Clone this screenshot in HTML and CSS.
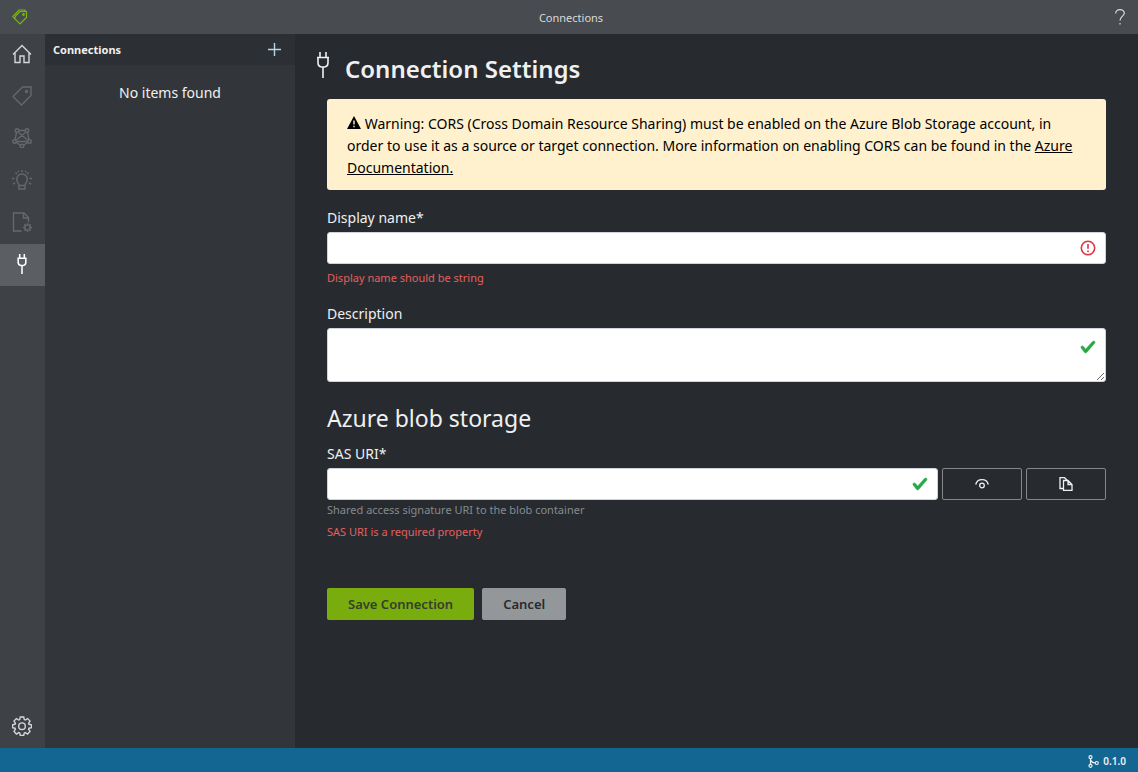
FILE: index.html
```html
<!DOCTYPE html>
<html lang="en">
<head>
<meta charset="utf-8">
<title>Connections</title>
<link rel="stylesheet" href="styles.css">
</head>
<body>
<svg class="symbols" aria-hidden="true">
  <symbol id="plug" viewBox="0 0 14 26"><path d="M4 0v5M10 0v5M1 5.500h12M2 5.500v5q0 4 3.500 4.500h3q3.500-.5 3.500-4.500v-5M7 15v11"/></symbol>
  <symbol id="tick" viewBox="0 0 8 8"><path d="M2.300 6.730.6 4.530c-.4-1.040.46-1.400 1.100-.8l1.100 1.400 3.400-3.800c.6-.63 1.600-.27 1.200.7l-4 4.600c-.43.5-.8.4-1.100.1z"/></symbol>
</svg>
<div class="app">
  <header class="titlebar">
    <svg class="logo" viewBox="0 0 16 16"><path d="M4 6.500 8 2.500h6.500v6L8 15 2.500 9.500zM3.500 10.500 .8 7.500 7 1h6v1.500"/><circle cx="11.500" cy="5.500" r=".8"/></svg>
    <span class="titlebar-text">Connections</span>
    <button class="help" aria-label="Help"><svg viewBox="0 0 10 16"><path d="M.7 4.500C.7 2 2.300.7 5 .7S9.300 2 9.300 4.200C9.300 7 5 7.500 5 11.500M5 14v1.500"/></svg></button>
  </header>
  <div class="workspace">
    <nav class="rail">
      <a href="#home" class="rail-item" aria-label="Home"><svg viewBox="0 0 20 20"><path d="M1 10.500 10 1.500l9 9M3 9v9.500h5v-6.500h4v6.500h5V9"/></svg></a>
      <a href="#tag" class="rail-item dim" aria-label="Tags"><svg viewBox="0 0 20 20"><path d="M1 10.500 10.500 1H19v8.500L9.500 19z"/><circle cx="14.500" cy="5.500" r="1"/></svg></a>
      <a href="#train" class="rail-item dim" aria-label="Train"><svg viewBox="0 0 20 20"><path d="M6.500 2.500h7M4.500 4.500 3 12M15.500 4.500 17 12M4 14l4 3M16 14l-4 3M6.500 4.500 15.500 12M13.500 4.500 4.500 12M5 13.500h10"/><circle cx="5" cy="2.500" r="1.800"/><circle cx="15" cy="2.500" r="1.800"/><circle cx="2.500" cy="13.500" r="1.800"/><circle cx="17.500" cy="13.500" r="1.800"/><circle cx="10" cy="18" r="1.800"/></svg></a>
      <a href="#analyze" class="rail-item dim" aria-label="Analyze"><svg viewBox="0 0 20 20"><path d="M7 15.500c0-2.500-2.300-3-2.300-6.200a5.300 5.300 0 0 1 10.600 0c0 3.200-2.300 3.700-2.300 6.200zM7 15.500V19h6v-3.500M10 0v2M3.500 2.500 5 4M16.500 2.500 15 4M0 8.500h2.500M17.500 8.500H20M1 14l2-1M19 14l-2-1M6 .8l.7 1.500M14 .8l-.7 1.500"/></svg></a>
      <a href="#compose" class="rail-item dim" aria-label="Compose"><svg viewBox="0 0 20 20"><path d="M9.500 19H1.500V1H12l4.500 4.500V10M11.500 1v5h5"/><circle cx="15.500" cy="15.500" r="2.600"/><path d="M15.500 11v2M15.500 18v2M11 15.500h2M18 15.500h2M12.300 12.300l1.400 1.400M17.300 17.300l1.400 1.400M18.700 12.300l-1.400 1.400M13.700 17.300l-1.400 1.400"/></svg></a>
      <a href="#connections" class="rail-item active" aria-label="Connections"><svg class="plug-small"><use href="#plug"/></svg></a>
      <a href="#settings" class="rail-item last" aria-label="Settings"><svg viewBox="0 0 20 20"><path d="M8.300 1h3.400l.6 2.600 1 .4 2.300-1.400L18 5l-1.400 2.300.4 1 2.500.6v2.700l-2.500.6-.4 1L18 15.500 15.600 18l-2.300-1.400-1 .4-.6 2.500H8.300L7.700 17l-1-.4L4.400 18 2 15.500l1.400-2.300-.4-1-2.500-.6V8.900L3 8.300l.4-1L2 5l2.400-2.400L6.700 4l1-.4z"/><circle cx="10" cy="10.200" r="3.300"/></svg></a>
    </nav>
    <aside class="list">
      <div class="list-header">
        <h2>Connections</h2>
        <button class="add" aria-label="New connection"><svg viewBox="0 0 13 13"><path d="M6.500 0v13M0 6.500h13"/></svg></button>
      </div>
      <p class="empty">No items found</p>
    </aside>
    <main class="main">
      <h1><svg><use href="#plug"/></svg><span>Connection Settings</span></h1>
      <form class="form">
        <div class="alert">
          <svg viewBox="0 0 14 13"><path d="M7 0 14 13H0z"/><path class="mark" d="M7 4.500v4M7 9.800v1.400"/></svg>
          Warning: CORS (Cross Domain Resource Sharing) must be enabled on the Azure Blob Storage account, in order to use it as a source or target connection. More information on enabling CORS can be found in the <a href="#docs">Azure Documentation.</a>
        </div>
        <div class="group">
          <label for="name">Display name*</label>
          <div class="field">
            <input id="name" type="text">
            <svg class="mark-icon invalid" viewBox="0 0 16 16"><circle cx="8" cy="8" r="6.700"/><path d="M8 4v4.800M8 10.400v1.800"/></svg>
          </div>
          <p class="error">Display name should be string</p>
        </div>
        <div class="group">
          <label for="description">Description</label>
          <div class="field">
            <textarea id="description"></textarea>
            <svg class="mark-icon valid upper"><use href="#tick"/></svg>
          </div>
        </div>
        <h3>Azure blob storage</h3>
        <div class="group uri">
          <label for="sas">SAS URI*</label>
          <div class="row">
            <div class="field">
              <input id="sas" type="password">
              <svg class="mark-icon valid"><use href="#tick"/></svg>
            </div>
            <button type="button" class="tool" aria-label="Show"><svg viewBox="0 0 14 14"><path d="M.7 7.500c.8-3 3.200-4.800 6.300-4.800s5.500 1.800 6.300 4.800"/><circle cx="7" cy="8.500" r="2.300"/></svg></button>
            <button type="button" class="tool" aria-label="Copy"><svg viewBox="0 0 14 14"><path d="M4 11.500H1V.7h4.500L8 3M4.500 3.500H9l4 4v6H4.500zM9 3.500v4h4"/></svg></button>
          </div>
          <p class="hint">Shared access signature URI to the blob container</p>
          <p class="error">SAS URI is a required property</p>
        </div>
        <div class="actions">
          <button type="submit" class="save">Save Connection</button>
          <button type="button" class="cancel">Cancel</button>
        </div>
      </form>
    </main>
  </div>
  <footer class="statusbar">
    <svg viewBox="0 0 11 13"><path d="M2.500 3.500v6M2.500 4.500q1 3.500 5 3.500"/><circle cx="2.500" cy="2.200" r="1.500"/><circle cx="2.500" cy="10.800" r="1.500"/><circle cx="8.800" cy="8" r="1.500"/></svg>
    <span>0.1.0</span>
  </footer>
</div>
</body>
</html>
```
FILE: styles.css
```css
* { box-sizing: border-box; }
body { margin: 0; font: 14px/22px "Segoe UI", "Noto Sans", "Open Sans", sans-serif; color: #f0f0f0; background: #272b30; }
h1, h2, h3, p { margin: 0; }
button { padding: 0; border: 0; background: none; color: inherit; font: inherit; }
svg { display: block; fill: none; stroke: currentColor; }
.symbols { position: absolute; width: 0; height: 0; }
.app { display: flex; flex-direction: column; min-height: 100vh; }

.titlebar { display: grid; grid-template-columns: 1fr auto 1fr; align-items: center; height: 34px; padding: 0 12px; background: #484b4f; font-size: 11px; color: #d9dadb; }
.titlebar-text { padding: 2px 0 0 4px; }
.logo { width: 16px; height: 16px; color: #7ab80e; stroke-width: 1.2; }
.help { justify-self: end; }
.help svg { width: 12px; height: 16px; stroke-width: 1.2; }

.workspace { display: flex; flex: 1; }
.rail { display: flex; flex-direction: column; width: 45px; background: #3e4146; }
.rail-item { display: grid; place-items: center; height: 42px; padding: 0 1px 2px 0; color: #d5d6d7; }
.rail-item svg { width: 20px; height: 20px; stroke-width: 1.4; }
.rail-item .plug-small { width: 12px; height: 20px; }
.plug-small use { stroke-width: 2; }
.dim { color: #65686c; }
.active { background: #5b5e62; color: #fff; }
.last { margin-top: auto; }

.list { width: 250px; background: #32353a; }
.list-header { display: flex; align-items: center; justify-content: space-between; height: 31px; padding: 0 14px 0 8px; background: #2c2f33; }
h2 { font-size: 11px; font-weight: 700; }
.add svg { width: 13px; height: 13px; stroke-width: 1.4; color: #b5d5e8; }
.empty { padding: 17px 16px; text-align: center; }

.main { flex: 1; min-width: 0; padding: 16px 32px; }
h1 { display: flex; gap: 15px; margin: 0 0 12px -11px; font-size: 24px; line-height: 37px; font-weight: 600; }
h1 svg { width: 14px; height: 26px; stroke-width: 1.6; margin-top: 2px; }
.alert { padding: 14px 24px 11px 20px; border-radius: 3px; background: #fff1ce; color: #000; }
.alert svg { display: inline-block; width: 14px; height: 13px; fill: #000; stroke: none; }
.alert .mark { stroke: #fff1ce; stroke-width: 1.4; }
.alert a { color: inherit; }
.group { margin-top: 17px; }
.group + .group { margin-top: 14px; }
label { display: block; margin-bottom: 3px; }
.field { position: relative; flex: 1; }
input, textarea { display: block; width: 100%; height: 32px; padding: 5px 36px 5px 12px; border: 1px solid #ced4da; border-radius: 3px; background: #fff; color: #222; font: inherit; }
textarea { height: 54px; resize: vertical; }
input:focus, textarea:focus { outline: 1px solid #7ab80e; }
.mark-icon { position: absolute; top: 8px; right: 10px; width: 16px; height: 16px; }
.invalid { color: #dc3545; stroke-width: 1.6; }
.valid { right: 9px; width: 18px; fill: #28a745; stroke: #28a745; stroke-width: .3; }
.upper { top: 11px; }
.error { margin-top: 3px; font-size: 11px; color: #e3605f; }
h3 { margin-top: 20px; font-size: 23px; line-height: 32px; font-weight: 400; }
.uri { margin-top: 9px; }
.row { display: flex; gap: 4px; }
.tool { display: grid; place-items: center; width: 80px; border: 1px solid #85878a; border-radius: 2px; }
.tool svg { width: 14px; height: 14px; stroke-width: 1.3; }
.hint { font-size: 11px; line-height: 20px; color: #868a8d; }
.uri .error { margin-top: 1px; }
.actions { display: flex; gap: 8px; margin-top: 45px; }
.actions button { padding: 5px 21px; border-radius: 2px; font-size: 13px; font-weight: 600; color: #272b30; }
.actions .save { background: #79ad0d; color: #34402d; }
.actions .cancel { background: #93979a; }

.statusbar { display: flex; align-items: center; justify-content: flex-end; gap: 4px; height: 24px; padding: 2px 12px 0; background: #146692; font-size: 10px; font-weight: 600; }
.statusbar svg { width: 11px; height: 13px; stroke-width: 1.2; }
```
